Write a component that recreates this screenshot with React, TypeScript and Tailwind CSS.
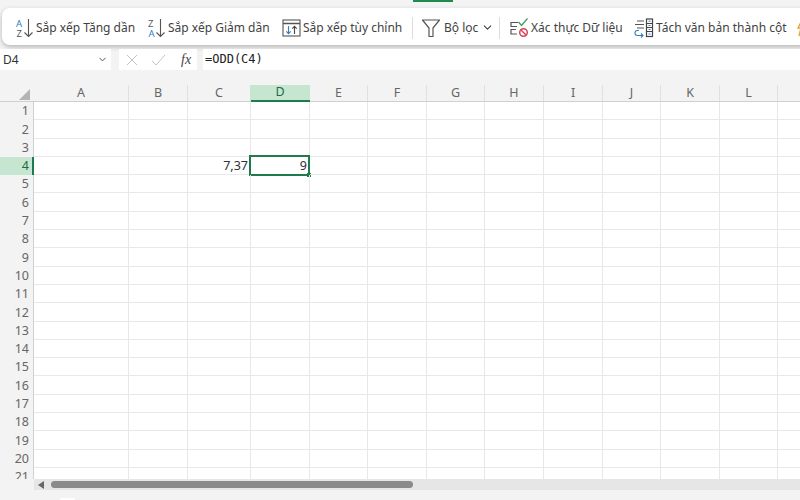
import React from "react";
import { ChevronDown } from "lucide-react";

const columns = [
  { name: "A", width: 95 },
  { name: "B", width: 59 },
  { name: "C", width: 63 },
  { name: "D", width: 59 },
  { name: "E", width: 58 },
  { name: "F", width: 59 },
  { name: "G", width: 58 },
  { name: "H", width: 59 },
  { name: "I", width: 59 },
  { name: "J", width: 58 },
  { name: "K", width: 59 },
  { name: "L", width: 58 },
  { name: "", width: 59 },
];

const rows = Array.from({ length: 21 }, (_, i) => i + 1);

function SortIcon({ top, bottom }: { top: string; bottom: string }) {
  return (
    <svg width="18" height="22" viewBox="0 0 18 22" fill="none" className="shrink-0">
      <text x="0" y="9.5" fontSize="9.5" fontFamily="Noto Sans, sans-serif" fill={top === "A" ? "#2f7fc4" : "#555"}>{top}</text>
      <text x="0.5" y="20" fontSize="9.5" fontFamily="Noto Sans, sans-serif" fill={bottom === "A" ? "#2f7fc4" : "#555"}>{bottom}</text>
      <path d="M12.5 2v17.5M8.5 15.5l4 4 4-4" stroke="#555" strokeWidth="1.1" />
    </svg>
  );
}

function CustomSortIcon() {
  return (
    <svg width="19" height="18" viewBox="0 0 19 18" fill="none" className="shrink-0">
      <rect x="1" y="1" width="17" height="16" stroke="#555" strokeWidth="1.1" />
      <path d="M1 4.5h17" stroke="#555" strokeWidth="1.5" />
      <path d="M6.5 7v7.5M4.3 12.3l2.2 2.3 2.2-2.3" stroke="#2f7fc4" strokeWidth="1.1" />
      <path d="M12.5 15V7.5M10.3 9.7l2.2-2.3 2.2 2.3" stroke="#444" strokeWidth="1.1" />
    </svg>
  );
}

function FilterIcon() {
  return (
    <svg width="20" height="20" viewBox="0 0 20 20" fill="none" className="shrink-0">
      <path d="M1.5 2h17l-6.5 8v8.5h-4V10z" stroke="#555" strokeWidth="1.2" strokeLinejoin="round" />
    </svg>
  );
}

function ValidationIcon() {
  return (
    <svg width="19" height="20" viewBox="0 0 19 20" fill="none" className="shrink-0">
      <path d="M8 4.5H1v4h6M6 11.5H1v4.5h6" stroke="#555" strokeWidth="1.2" />
      <path d="M8.5 4l3 3.5 6-7" stroke="#3f9a5f" strokeWidth="1.2" />
      <circle cx="13.5" cy="14.5" r="3.8" stroke="#d6455a" strokeWidth="1.5" />
      <path d="M11 12l5 5" stroke="#d6455a" strokeWidth="1.4" />
    </svg>
  );
}

function TextToColumnsIcon() {
  return (
    <svg width="20" height="20" viewBox="0 0 20 20" fill="none" className="shrink-0">
      <path d="M3 3h7M1 6.5h9M3 10h7" stroke="#555" strokeWidth="1.1" />
      <rect x="12.5" y="1" width="6" height="17.5" stroke="#444" strokeWidth="1.2" />
      <path d="M12.5 5.5h6M12.5 9.5h6M12.5 13.5h6" stroke="#444" strokeWidth="1" />
      <path d="M14.5 3.2h2M14.5 7.5h2M14.5 11.5h2M14.5 16h2" stroke="#2f7fc4" strokeWidth="1" />
      <path d="M5 12.5H3.5a2.5 2.5 0 0 0 0 5H9M7 15.5l2 2-2 2" stroke="#2f7fc4" strokeWidth="1.1" />
    </svg>
  );
}

function FlashIcon() {
  return (
    <svg width="10" height="18" viewBox="0 0 10 18" fill="none" className="shrink-0">
      <path d="M5 1L1 9h3l-2 8" stroke="#e8a33d" strokeWidth="1.4" />
      <path d="M5 1h4v8" stroke="#e8b04a" strokeWidth="1.4" />
    </svg>
  );
}

function Divider() {
  return <div className="h-[22px] w-px shrink-0 bg-[#dcdcdc]" />;
}

export default function App() {
  return (
    <div className="relative flex h-[500px] w-[800px] flex-col overflow-hidden bg-[#f3f3f3] font-['Noto_Sans',sans-serif]">
      {/* active tab marker */}
      <div className="flex h-[8px] shrink-0 pl-[413px]">
        <div className="h-[2px] w-[40px] bg-[#1f8a50]" />
      </div>

      {/* Ribbon */}
      <div className="ml-[2px] flex h-[37px] w-[820px] shrink-0 items-center rounded-l-lg bg-white pl-[14px] pt-[2px] text-[12px] whitespace-nowrap text-[#424242] shadow-[0_2px_5px_rgba(0,0,0,0.25)]">
        <SortIcon top="A" bottom="Z" />
        <span className="ml-[2px] w-[112px]">Sắp xếp Tăng dần</span>
        <SortIcon top="Z" bottom="A" />
        <span className="ml-[2px] w-[114px]">Sắp xếp Giảm dần</span>
        <CustomSortIcon />
        <span className="ml-[2px] w-[109px]">Sắp xếp tùy chỉnh</span>
        <Divider />
        <div className="ml-[8px]"><FilterIcon /></div>
        <span className="ml-[3px] w-[37px]">Bộ lọc</span>
        <ChevronDown size={13} className="mr-[5px] shrink-0" />
        <Divider />
        <div className="ml-[10px]"><ValidationIcon /></div>
        <span className="ml-[2px] w-[103px]">Xác thực Dữ liệu</span>
        <TextToColumnsIcon />
        <span className="ml-[2px] w-[141px]">Tách văn bản thành cột</span>
        <FlashIcon />
      </div>

      {/* Formula bar */}
      <div className="mt-[4px] flex h-[21px] shrink-0">
        <div className="flex w-[111px] items-center justify-between bg-white pl-[3px] pr-[3px] text-[12px] text-[#333]">
          <span>D4</span>
          <ChevronDown size={11} className="text-[#444]" />
        </div>
        <div className="ml-[8px] flex w-[78px] items-center bg-white pl-[7px]">
          <svg width="12" height="12" viewBox="0 0 12 12" fill="none" stroke="#c4c4c4" strokeWidth="1">
            <path d="M1 1l10 10M11 1L1 11" />
          </svg>
          <svg width="15" height="12" viewBox="0 0 15 12" fill="none" stroke="#c4c4c4" strokeWidth="1" className="ml-[13px]">
            <path d="M1 7l4 4L14 1" />
          </svg>
          <span className="ml-[15px] font-['Liberation_Serif',serif] text-[14px] italic text-[#444]">fx</span>
        </div>
        <div className="ml-[6px] flex flex-1 items-center bg-white pb-[1px] pl-[2px] font-['DejaVu_Sans_Mono',monospace] text-[12px] text-[#222]">
          =ODD(C4)
        </div>
      </div>

      <div className="h-[15px] shrink-0" />

      {/* Sheet */}
      <div className="h-[394px] shrink-0 overflow-hidden bg-white text-[12.5px]">
        <div className="box-content flex h-[16px] border-b border-[#d0d0d0] bg-[#f3f3f3] text-[#666]">
          <div className="flex w-[34px] shrink-0 items-end justify-end pb-[1px] pr-[4px]">
            <div className="h-0 w-0 border-b-[11px] border-l-[11px] border-b-[#b4b4b4] border-l-transparent" />
          </div>
          {columns.map((col) => (
            <div
              key={col.name}
              style={{ width: col.width }}
              className={
                col.name === "D"
                  ? "flex h-[17px] shrink-0 items-center justify-center border-b-2 border-[#1f7a4c] bg-[#c6e6d1] pr-[1px] text-[#1f6b43] shadow-[-1px_0_0_#c6e6d1]"
                  : "flex shrink-0 items-center justify-center border-r border-[#e0e0e0]"
              }
            >
              {col.name}
            </div>
          ))}
        </div>

        <div className="h-[377px] overflow-hidden">
          {rows.map((row) => (
            <div key={row} className="flex h-[18.3px]">
              <div
                className={
                  row === 4
                    ? "flex w-[34px] shrink-0 items-center justify-end border-r-2 border-[#1f7a4c] bg-[#c6e6d1] pr-[3px] pt-[1px] text-[#1f6b43]"
                    : "flex w-[34px] shrink-0 items-center justify-end border-r border-[#d0d0d0] bg-[#f3f3f3] pr-[4px] pt-[1px] text-[#666]"
                }
              >
                {row}
              </div>
              {columns.map((col) => (
                <div
                  key={col.name}
                  style={{ width: col.width }}
                  className="relative flex shrink-0 items-center justify-end border-r border-b border-[#e8e8e8] pr-[2px] pt-[1px] text-[#333]"
                >
                  {row === 4 && col.name === "C" && "7,37"}
                  {row === 4 && col.name === "D" && (
                    <>
                      <span>9</span>
                      <div className="absolute -left-[2px] -top-[2px] -right-px -bottom-[2px] border-2 border-[#1f7a4c]" />
                      <div className="absolute -right-[2px] -bottom-[3px] h-[4px] w-[4px] bg-[#1f7a4c]" />
                    </>
                  )}
                </div>
              ))}
            </div>
          ))}
        </div>
      </div>

      {/* Horizontal scrollbar */}
      <div className="flex h-[11px] shrink-0">
        <div className="w-[34px] shrink-0 bg-[#f3f3f3]" />
        <div className="flex flex-1 items-center bg-[#e6e6e6] pl-[4px]">
          <div className="h-0 w-0 border-y-[4px] border-r-[6px] border-y-transparent border-r-[#666]" />
          <div className="ml-[7px] h-[7px] w-[362px] rounded-full bg-[#8a8a8a]" />
        </div>
      </div>

      {/* Sheet tab edge, cut off by the bottom of the shot */}
      <div className="mt-[8px] ml-[60px] h-[2px] w-[15px] rounded-t-sm bg-white" />
    </div>
  );
}
